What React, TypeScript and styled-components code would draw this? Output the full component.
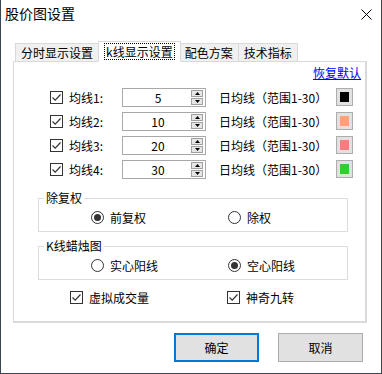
import React from "react";
import styled, { createGlobalStyle } from "styled-components";

const Global = createGlobalStyle`
  html, body { margin: 0; padding: 0; background: #ffffff; }
  body { font-family: "Noto Sans CJK SC", "Noto Sans", sans-serif; font-size: 12px; color: #000; }
  * { box-sizing: border-box; }
`;

const Window = styled.div`
  width: 382px;
  height: 374px;
  background: #fff;
  border-left: 1px solid #3a4651;
  border-right: 1px solid #3a4651;
  border-bottom: 1px solid #3a4651;
  display: flex;
  flex-direction: column;
`;

const TitleBar = styled.div`
  height: 41px;
  display: flex;
  align-items: flex-start;
  justify-content: space-between;
  padding: 3px 9px 0 4px;
`;

const Title = styled.div`
  font-size: 14px;
  line-height: 20px;
`;

const CloseIcon = styled.svg`
  width: 11px;
  height: 11px;
  margin-top: 6px;
`;

const TabsRow = styled.div`
  display: flex;
  align-items: flex-end;
  padding-left: 14px;
  height: 21px;
  margin-bottom: -1px;
  position: relative;
  z-index: 1;
`;

const Tab = styled.div<{ $active?: boolean }>`
  height: ${(p) => (p.$active ? 21 : 19)}px;
  padding: 0 ${(p) => (p.$active ? 6 : 5)}px;
  margin: 0 ${(p) => (p.$active ? -1 : 0)}px;
  border: 1px solid #d9d9d9;
  border-bottom: ${(p) => (p.$active ? "1px solid #fff" : "1px solid #d9d9d9")};
  background: ${(p) => (p.$active ? "#fff" : "#f0f0f0")};
  display: flex;
  align-items: center;
  font-size: 12px;
  line-height: 15px;
  position: relative;
  z-index: ${(p) => (p.$active ? 2 : 1)};
  & + & { margin-left: -1px; }
`;

const Focus = styled.span`
  outline: 1px dotted #000;
  outline-offset: 0px;
  padding: 0 1px;
`;

const Panel = styled.div`
  margin: 0 14px 0 12px;
  height: 262px;
  border: 1px solid #d9d9d9;
  border-right-width: 2px;
  border-bottom-width: 2px;
  display: flex;
  flex-direction: column;
  padding-right: 4px;
`;

const LinkRow = styled.div`
  display: flex;
  justify-content: flex-end;
  padding-top: 3px;
  height: 19px;
`;

const Link = styled.a`
  color: #0000ff;
  text-decoration: underline;
  line-height: 16px;
`;

const Rows = styled.div`
  margin-top: 4px;
  display: flex;
  flex-direction: column;
`;

const Row = styled.div`
  height: 24px;
  display: flex;
  align-items: center;
  padding-left: 36px;
`;

const CheckBoxBox = styled.span`
  width: 13px;
  height: 13px;
  border: 1px solid #333;
  background: #fff;
  display: inline-flex;
  align-items: center;
  justify-content: center;
  flex: none;
`;

const Label = styled.span`
  width: 59px;
  padding-left: 6px;
  white-space: nowrap;
`;

const Spin = styled.div`
  width: 84px;
  height: 19px;
  border: 1px solid #a8a8a8;
  display: flex;
  align-items: stretch;
  margin-right: 13px;
`;

const SpinValue = styled.div`
  flex: 1;
  text-align: center;
  line-height: 17px;
  padding-left: 2px;
`;

const SpinButtons = styled.div`
  width: 14px;
  display: flex;
  flex-direction: column;
  padding: 1px 2px 1px 0;
  gap: 1px;
`;

const SpinBtn = styled.div`
  flex: 1;
  background: #e6e6e6;
  border: 1px solid #a0a0a0;
  display: flex;
  align-items: center;
  justify-content: center;
`;

const RangeText = styled.span`
  width: 117px;
  white-space: nowrap;
`;

const Swatch = styled.div`
  width: 17px;
  height: 18px;
  border: 1px solid #adadad;
  background: #e1e1e1;
  padding: 3px;
  display: flex;
`;

const SwatchFill = styled.div`
  flex: 1;
`;

const Group = styled.fieldset`
  margin: 0 0 0 24px;
  width: 310px;
  padding: 0 0 3px 0;
  border: 1px solid #dcdcdc;
  min-inline-size: auto;
  & + & { margin-top: 6px; }
`;

const GroupFirst = styled(Group)`
  margin-top: 9px;
`;

const Legend = styled.legend`
  margin-left: 5px;
  padding: 0 2px;
  line-height: 16px;
  font-size: 12px;
`;

const OptionRow = styled.div`
  height: 22px;
  display: grid;
  grid-template-columns: 137px 120px;
  padding-left: 52px;
  align-items: center;
`;

const Option = styled.label`
  display: flex;
  align-items: center;
  gap: 6px;
  white-space: nowrap;
`;

const RadioCircle = styled.span<{ $on?: boolean }>`
  width: 13px;
  height: 13px;
  border-radius: 50%;
  border: 1px solid #333;
  display: inline-flex;
  align-items: center;
  justify-content: center;
  flex: none;
  &::after {
    content: "";
    width: 7px;
    height: 7px;
    border-radius: 50%;
    background: ${(p) => (p.$on ? "#333" : "transparent")};
  }
`;

const BottomChecks = styled.div`
  margin-top: 7px;
  height: 20px;
  display: grid;
  grid-template-columns: 157px 120px;
  padding-left: 56px;
  align-items: center;
`;

const Buttons = styled.div`
  display: flex;
  justify-content: flex-end;
  gap: 19px;
  padding-right: 18px;
  margin-top: 10px;
`;

const Button = styled.button<{ $primary?: boolean }>`
  width: 85px;
  height: 29px;
  background: #e1e1e1;
  border: ${(p) => (p.$primary ? "2px solid #0078d7" : "1px solid #adadad")};
  font-family: inherit;
  font-size: 12px;
  color: #000;
  padding: 0;
`;

const Check = () => (
  <CheckBoxBox>
    <svg width="11" height="11" viewBox="0 0 11 11">
      <path d="M1.5 5.5 L4.2 8.2 L9.5 2.5" fill="none" stroke="#333" strokeWidth="1.2" />
    </svg>
  </CheckBoxBox>
);

const Arrow = ({ up }: { up?: boolean }) => (
  <svg width="5" height="3" viewBox="0 0 5 3">
    <path d={up ? "M0 3 L2.5 0 L5 3 Z" : "M0 0 L2.5 3 L5 0 Z"} fill="#000" />
  </svg>
);

const lines = [
  { n: 1, v: 5, c: "#000000" },
  { n: 2, v: 10, c: "#ffa07a" },
  { n: 3, v: 20, c: "#f08080" },
  { n: 4, v: 30, c: "#32cd32" },
];

export default function App() {
  return (
    <>
      <Global />
      <Window>
        <TitleBar>
          <Title>股价图设置</Title>
          <CloseIcon viewBox="0 0 11 11">
            <path d="M0.5 0.5 L10.5 10.5 M10.5 0.5 L0.5 10.5" stroke="#000" strokeWidth="1" />
          </CloseIcon>
        </TitleBar>
        <TabsRow>
          <Tab>分时显示设置</Tab>
          <Tab $active>
            <Focus>k线显示设置</Focus>
          </Tab>
          <Tab>配色方案</Tab>
          <Tab>技术指标</Tab>
        </TabsRow>
        <Panel>
          <LinkRow>
            <Link>恢复默认</Link>
          </LinkRow>
          <Rows>
            {lines.map((l) => (
              <Row key={l.n}>
                <Check />
                <Label>均线{l.n}:</Label>
                <Spin>
                  <SpinValue>{l.v}</SpinValue>
                  <SpinButtons>
                    <SpinBtn>
                      <Arrow up />
                    </SpinBtn>
                    <SpinBtn>
                      <Arrow />
                    </SpinBtn>
                  </SpinButtons>
                </Spin>
                <RangeText>日均线（范围1-30）</RangeText>
                <Swatch>
                  <SwatchFill style={{ background: l.c }} />
                </Swatch>
              </Row>
            ))}
          </Rows>
          <GroupFirst>
            <Legend>除复权</Legend>
            <OptionRow>
              <Option>
                <RadioCircle $on />
                前复权
              </Option>
              <Option>
                <RadioCircle />
                除权
              </Option>
            </OptionRow>
          </GroupFirst>
          <Group>
            <Legend>K线蜡烛图</Legend>
            <OptionRow>
              <Option>
                <RadioCircle />
                实心阳线
              </Option>
              <Option>
                <RadioCircle $on />
                空心阳线
              </Option>
            </OptionRow>
          </Group>
          <BottomChecks>
            <Option>
              <Check />
              虚拟成交量
            </Option>
            <Option>
              <Check />
              神奇九转
            </Option>
          </BottomChecks>
        </Panel>
        <Buttons>
          <Button $primary>确定</Button>
          <Button>取消</Button>
        </Buttons>
      </Window>
    </>
  );
}
